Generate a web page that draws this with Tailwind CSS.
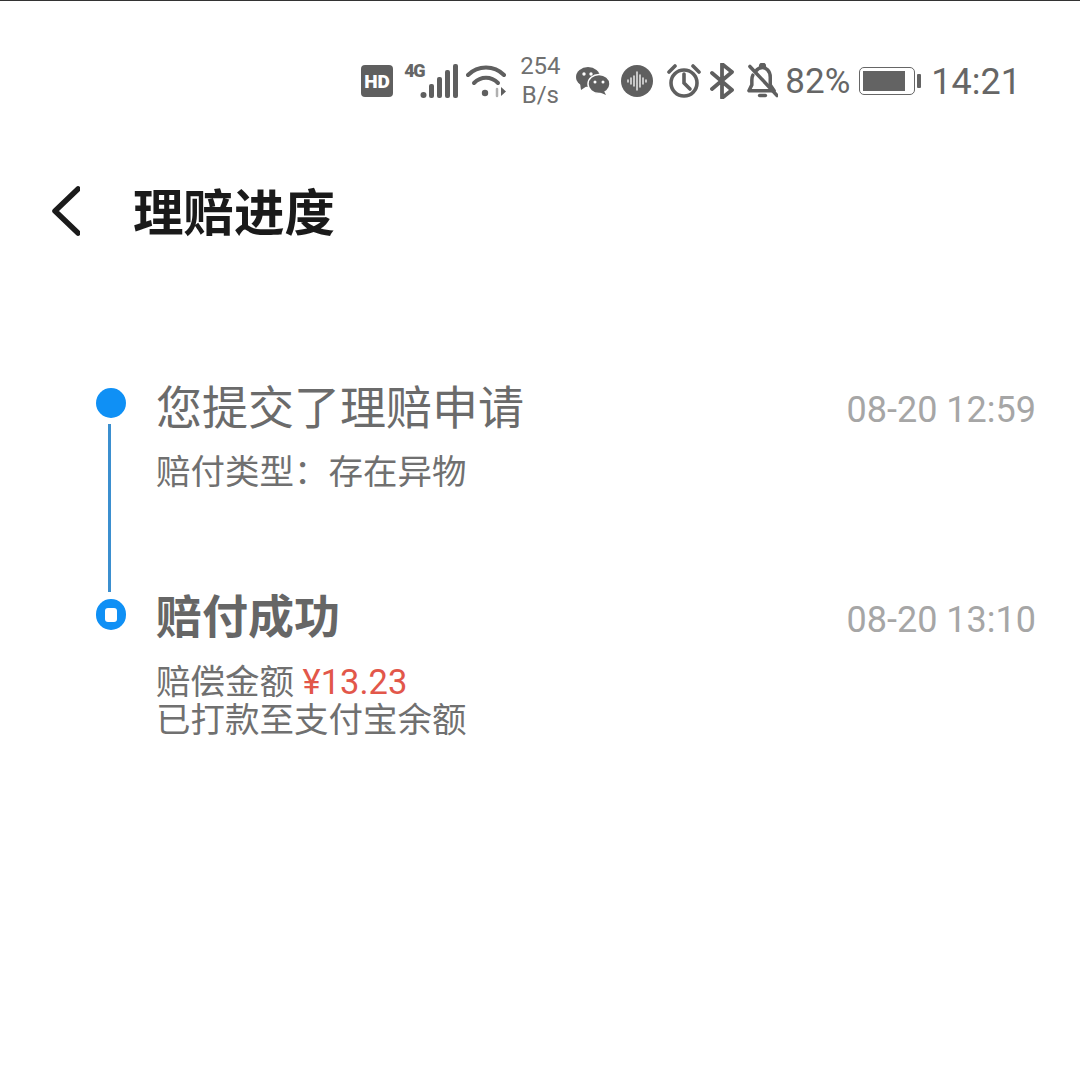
<!DOCTYPE html>
<html lang="zh-CN">
<head>
  <meta charset="UTF-8" />
  <meta name="viewport" content="width=device-width, initial-scale=1.0"/>
  <title>理赔进度</title>
  <script src="https://cdn.jsdelivr.net/npm/@tailwindcss/browser@4"></script>
</head>
<body class="bg-white h-[1080px] w-[1080px] overflow-hidden font-['Roboto','Noto_Sans_CJK_SC',sans-serif]">
  <div class="h-px bg-[#333]"></div>

  <!-- status bar -->
  <div class="h-[159px] pt-[49px] pr-[59px] flex justify-end items-start text-[#666]">
    <div class="flex items-center h-[62px]">
      <svg class="w-[32px] h-[32px] mr-[9px]" viewBox="0 0 32 32"><rect width="32" height="32" y="0" rx="4" fill="#5f5f5f"/><text x="16" y="23" text-anchor="middle" font-family="Roboto" font-weight="900" font-size="19" fill="#fff">HD</text></svg>
      <div class="relative w-[56px] h-[36px] mr-[8px]">
        <span class="absolute left-[2px] top-[-1px] text-[18px] font-black leading-[18px] tracking-[-1.5px]">4G</span>
        <svg class="absolute left-0 top-0 w-[56px] h-[36px]" viewBox="0 0 56 36" fill="#5f5f5f"><circle cx="21.500" cy="32" r="3"/><rect x="27" y="21" width="5" height="14" rx="2"/><rect x="35" y="14" width="5" height="21" rx="2"/><rect x="43" y="7" width="5" height="28" rx="2"/><rect x="51" y="1" width="5" height="34" rx="2"/></svg>
      </div>
      <svg class="w-[42px] h-[34px] mr-[11px]" viewBox="0 0 42 34" fill="none" stroke="#5f5f5f" stroke-width="4" stroke-linecap="round"><path d="M2 11C12 1 28 1 38 11"/><path d="M8 19C15 12 25 12 32 19"/><circle cx="19" cy="29" r="3.200" fill="#5f5f5f" stroke="none"/><path d="M31 25v7" stroke-width="2.500" stroke="#b0b0b0"/><path d="M35 23v9l5-4.500z" stroke="none" fill="#5f5f5f"/></svg>
      <div class="w-[42px] mr-[15px] text-[24px] leading-[29px] text-center text-[#707070] -mt-[1px]">254<br>B/s</div>
      <svg class="w-[34px] h-[30px] mr-[11px]" viewBox="0 0 34 30" fill="#5f5f5f"><ellipse cx="12" cy="11" rx="12" ry="10"/><path d="M4 17l1 7 6-4z"/><ellipse cx="23" cy="18" rx="11" ry="9.500" stroke="#fff" stroke-width="1.500"/><path d="M28 25l2 4-7-3z"/><circle cx="8" cy="8" r="1.700" fill="#fff"/><circle cx="15" cy="8" r="1.700" fill="#fff"/><circle cx="19" cy="16" r="1.500" fill="#fff"/><circle cx="27" cy="16" r="1.500" fill="#fff"/></svg>
      <svg class="w-[32px] h-[32px] mr-[14px]" viewBox="0 0 32 32"><circle cx="16" cy="16" r="16" fill="#5f5f5f"/><path d="M7 15v2M10 13v6M13 11v10M16 7v18M19 10v12M22 13v6M25 15v2" stroke="#fff" stroke-width="1.300" stroke-linecap="round"/></svg>
      <svg class="w-[34px] h-[34px] mr-[9px]" viewBox="0 0 34 34" fill="none" stroke="#5f5f5f" stroke-width="3.600" stroke-linecap="round"><circle cx="17" cy="19" r="13"/><path d="M17 10v9l6 6"/><path d="M2 8l6-6M32 8l-6-6"/></svg>
      <svg class="w-[24px] h-[36px] mr-[13px]" viewBox="0 0 24 36" fill="none" stroke="#5f5f5f" stroke-width="3.800" stroke-linejoin="round" stroke-linecap="round"><path d="M2 10l20 17-10 8V1l10 8L2 26"/></svg>
      <svg class="w-[31px] h-[36px] mr-[7px]" viewBox="0 0 32 36" fill="none" stroke="#5f5f5f" stroke-width="3.600" stroke-linecap="round" stroke-linejoin="round"><path d="M9 8c2-3 4-4 7-4s8 3 8 10v8l4 6H9M6 12c-1 2-1 3-1 5v5l-3 6h7"/><path d="M14 3c0-3 4-3 4 0"/><path d="M13 33h6"/><path d="M3 3l28 30"/></svg>
      <span class="text-[35px] leading-[62px] mr-[9px] mt-[2px]">82%</span>
      <div class="flex items-center mr-[10px]">
        <div class="w-[56px] h-[28px] rounded-[5px] border border-[#666] p-[3px]"><div class="h-full w-[42px] bg-[#636363]"></div></div>
        <div class="w-[4px] h-[14px] bg-[#636363] ml-[2px] rounded-[1px]"></div>
      </div>
      <span class="text-[36px] leading-[62px] mt-[1px]">14:21</span>
    </div>
  </div>

  <!-- header -->
  <div class="h-[109px] flex items-center pl-[52px]">
    <svg class="w-[28px] h-[50px] mr-[53px] -mt-[7px]" viewBox="0 0 28 50" fill="none" stroke="#1b1b1b" stroke-width="5.500" stroke-linecap="round" stroke-linejoin="round"><path d="M26 3L3 25l23 22"/></svg>
    <h1 class="text-[50.500px] leading-[60px] font-bold text-[#1a1a1a] -mt-[2px]">理赔进度</h1>
  </div>

  <!-- timeline -->
  <div class="pt-[116px] pl-[96px] pr-[44px]">
    <div class="flex h-[210px]">
      <div class="w-[60px] flex flex-col items-start">
        <div class="w-[30px] h-[30px] mt-[3px] rounded-full bg-[#0f90f5]"></div>
        <div class="w-[3px] h-[168px] mt-[6px] ml-[12px] bg-[#3b8fcf]"></div>
      </div>
      <div class="flex-1 -mt-[4px]">
        <div class="flex justify-between items-start h-[54px]">
          <span class="text-[46px] leading-[54px] text-[#6b6b6b]">您提交了理赔申请</span>
          <span class="text-[36px] leading-[48px] text-[#a6a6a6] mt-[5px]">08-20 12:59</span>
        </div>
        <p class="mt-[12px] text-[34.500px] leading-[50px] text-[#707070]">赔付类型：存在异物</p>
      </div>
    </div>
    <div class="flex">
      <div class="w-[60px]">
        <div class="w-[30px] h-[31px] mt-[4px] rounded-full bg-[#0f90f5] flex items-center justify-center">
          <div class="w-[12px] h-[14px] rounded-[3px] bg-white"></div>
        </div>
      </div>
      <div class="flex-1 -mt-[5px]">
        <div class="flex justify-between items-start h-[54px]">
          <span class="text-[46px] leading-[54px] font-bold text-[#666]">赔付成功</span>
          <span class="text-[36px] leading-[48px] text-[#a6a6a6] mt-[6px]">08-20 13:10</span>
        </div>
        <p class="mt-[19px] text-[34.500px] leading-[38px] text-[#707070]">赔偿金额 <span class="text-[#e2574a]">¥13.23</span><br>已打款至支付宝余额</p>
      </div>
    </div>
  </div>
</body>
</html>
